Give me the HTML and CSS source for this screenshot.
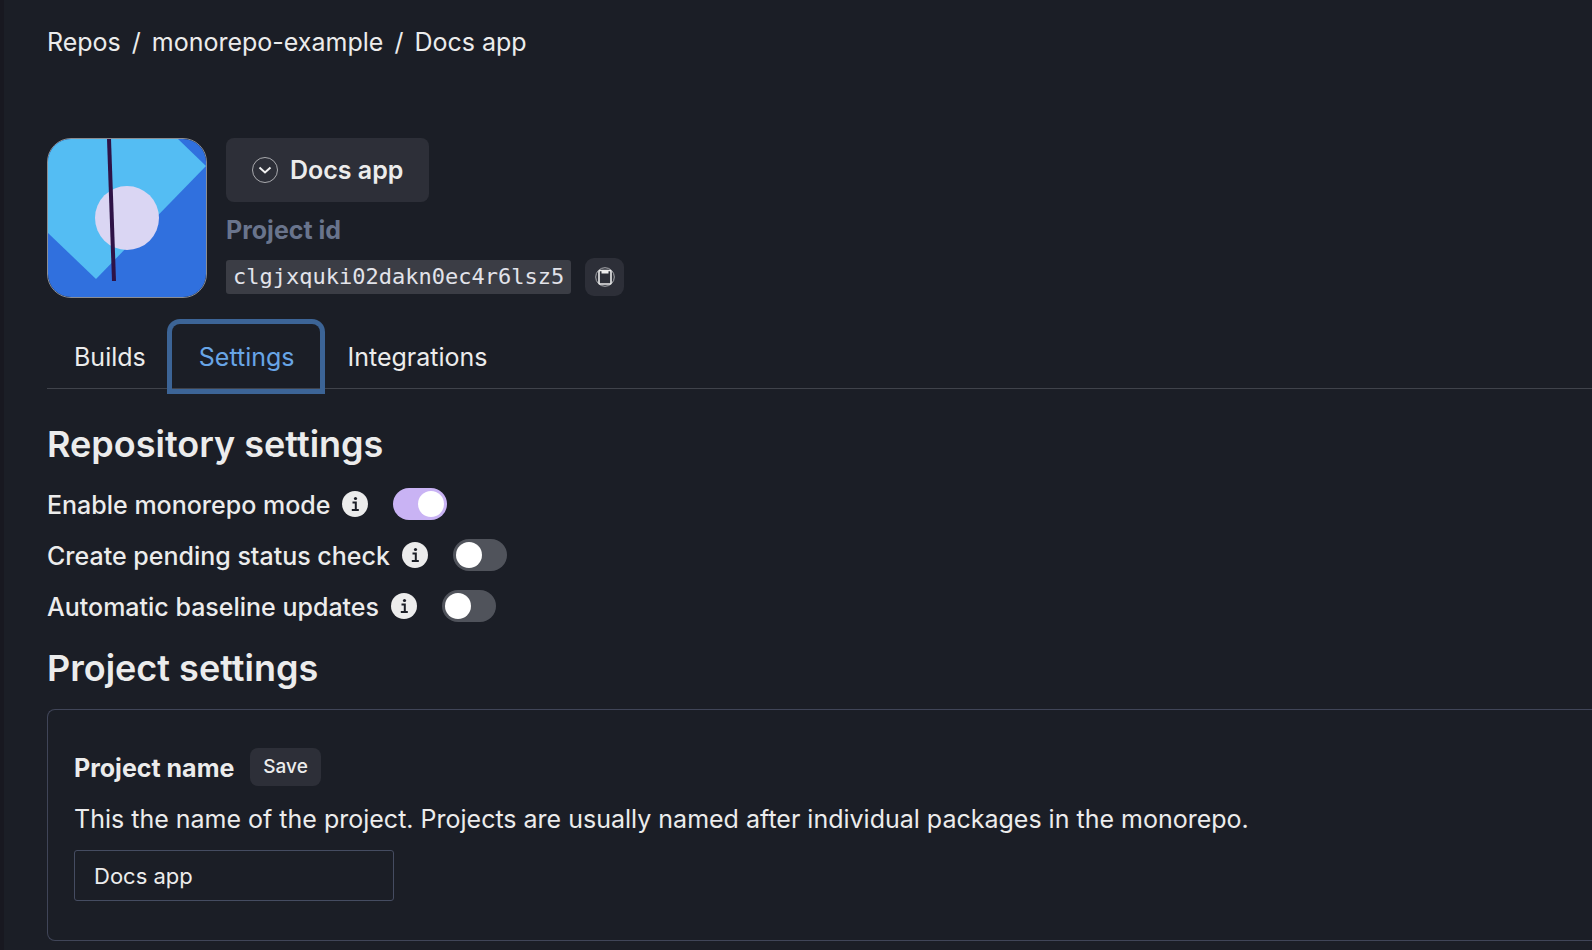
FILE: index.html
```html
<!DOCTYPE html>
<html lang="en">
<head>
<meta charset="utf-8">
<meta name="viewport" content="width=device-width, initial-scale=1">
<title>Docs app – Settings</title>
<link rel="stylesheet" href="styles.css">
</head>
<body>
<svg class="sprite" aria-hidden="true">
  <symbol id="info" viewBox="0 0 26 26">
    <circle cx="13" cy="13" r="13" fill="#ececec"/>
    <circle cx="13.500" cy="7.500" r="1.600" fill="#1b1e26"/>
    <path d="M10.500 11.500h3.300v7M9.800 18.900h7" fill="none" stroke="#1b1e26" stroke-width="2"/>
  </symbol>
</svg>
<main class="page">
  <nav class="breadcrumb" aria-label="Breadcrumb">
    <a href="#">Repos</a><span>/</span><a href="#">monorepo-example</a><span>/</span><a href="#">Docs app</a>
  </nav>

  <header class="project">
    <div class="avatar">
      <svg viewBox="0 0 158 158" aria-hidden="true">
        <rect width="158" height="158" fill="#3070de"/>
        <path d="M0 0H130L158 27 48 140 0 94z" fill="#54bdf3"/>
        <circle cx="79" cy="79" r="32" fill="#dad6f3"/>
        <path d="M61 0 66 142" stroke="#2e1246" stroke-width="4"/>
      </svg>
    </div>
    <div class="project-info">
      <button class="project-menu" type="button">
        <svg class="chevron" viewBox="0 0 26 26" fill="none" aria-hidden="true">
          <circle cx="13" cy="13" r="12.500" stroke="#a9aaae"/>
          <path d="M7.500 10.500l5.500 5 5.500-5" stroke="#f0f0f0" stroke-width="2"/>
        </svg>
        Docs app
      </button>
      <div class="id-label">Project id</div>
      <div class="id-row">
        <code class="id-code">clgjxquki02dakn0ec4r6lsz5</code>
        <button class="copy" type="button" aria-label="Copy project id">
          <svg viewBox="0 0 20 20" fill="none" aria-hidden="true">
            <circle cx="10" cy="10" r="9.300" stroke="#a9aaae"/>
            <rect x="4" y="3.500" width="12" height="13.500" rx="1" stroke="#ececec" stroke-width="1.600"/>
            <path d="M6.500 3h7v3.500h-7z" fill="#ececec"/>
          </svg>
        </button>
      </div>
    </div>
  </header>

  <nav class="tabs" aria-label="Project">
    <a class="tab" href="#">Builds</a>
    <a class="tab tab-active" href="#" aria-current="page">Settings</a>
    <a class="tab" href="#">Integrations</a>
  </nav>

  <section class="repo-settings">
    <h2>Repository settings</h2>
    <div class="option">
      <label for="monorepo">Enable monorepo mode</label>
      <svg class="info"><use href="#info"/></svg>
      <input class="switch" id="monorepo" type="checkbox" role="switch" checked>
    </div>
    <div class="option">
      <label for="pending">Create pending status check</label>
      <svg class="info"><use href="#info"/></svg>
      <input class="switch" id="pending" type="checkbox" role="switch">
    </div>
    <div class="option">
      <label for="baseline">Automatic baseline updates</label>
      <svg class="info"><use href="#info"/></svg>
      <input class="switch" id="baseline" type="checkbox" role="switch">
    </div>
  </section>

  <section>
    <h2>Project settings</h2>
    <form class="card">
      <div class="card-head">
        <label class="card-title" for="name">Project name</label>
        <button class="save" type="button">Save</button>
      </div>
      <p class="card-text">This the name of the project. Projects are usually named after individual packages in the monorepo.</p>
      <input class="field" id="name" type="text" value="Docs app">
    </form>
  </section>
</main>
</body>
</html>
```
FILE: styles.css
```css
* { box-sizing: border-box; }

body {
  margin: 0;
  background: #1b1e26;
  color: #ececec;
  font: 400 25px/32px Inter, "Liberation Sans", sans-serif;
}

a { color: inherit; text-decoration: none; }
button, input { font: inherit; color: inherit; }
button { border: 0; cursor: pointer; }
.sprite { position: absolute; width: 0; height: 0; }

.page {
  min-height: 100vh;
  padding: 26px 0 8px 43px;
  border-left: 4px solid #181820;
}

.breadcrumb { display: flex; gap: 11px; }

.project { display: flex; gap: 19px; margin-top: 80px; }
.avatar {
  width: 160px;
  height: 160px;
  border: 1px solid #8b8d92;
  border-radius: 24px;
  overflow: hidden;
}
.avatar svg { display: block; }
.project-info { display: flex; flex-direction: column; align-items: flex-start; }
.project-menu {
  display: flex;
  align-items: center;
  gap: 12px;
  padding: 16px 26px;
  border-radius: 8px;
  background: #2d2f38;
  font-weight: 600;
}
.chevron { width: 26px; height: 26px; }
.id-label { margin-top: 12px; color: #69748c; font-weight: 700; }
.id-row { display: flex; align-items: center; gap: 14px; margin-top: 12px; }
.id-code {
  padding: 1px 7px;
  border-radius: 3px;
  background: #3b3d45;
  color: #e2e3ea;
  font: 22px/32px "DejaVu Sans Mono", monospace;
}
.copy {
  display: flex;
  align-items: center;
  justify-content: center;
  width: 39px;
  height: 38px;
  padding: 0;
  border-radius: 9px;
  background: #2d2f38;
}
.copy svg { width: 20px; height: 20px; }

.tabs {
  display: flex;
  margin-top: 26px;
  border-bottom: 1px solid #40434b;
}
.tab { padding: 17px 26px 15px 27px; }
.tab-active {
  margin-bottom: -1px;
  border-radius: 8px 8px 0 0;
  box-shadow: 0 0 0 5px #3c6496;
  color: #68a5e6;
}

h2 { margin: 0; font-size: 36px; line-height: 48px; font-weight: 600; }
.repo-settings { padding: 31px 0 13px; }
.repo-settings h2 { margin-bottom: 10px; }
.option { display: flex; align-items: center; height: 51px; font-weight: 500; }
.option label { padding-top: 2px; }
.info { width: 26px; height: 26px; margin: 0 25px 0 12px; }
.switch {
  display: flex;
  appearance: none;
  width: 54px;
  height: 32px;
  margin: 0;
  padding: 3px;
  border-radius: 16px;
  background: #50535b;
}
.switch::before {
  content: "";
  width: 26px;
  height: 26px;
  border-radius: 50%;
  background: #fff;
}
.switch:checked { justify-content: flex-end; background: #c9b3f4; }

.card {
  display: flex;
  flex-direction: column;
  align-items: flex-start;
  margin-top: 17px;
  padding: 38px 26px 39px;
  border: 1px solid #404558;
  border-right: 0;
  border-radius: 8px 0 0 8px;
}
.card-head { display: flex; align-items: center; gap: 16px; }
.card-title { padding-top: 2px; font-weight: 700; }
.save {
  padding: 3px 13px;
  border-radius: 8px;
  background: #2d2f38;
  font-size: 19px;
  font-weight: 500;
}
.card-text { margin: 17px 0 15px; }
.field {
  width: 320px;
  height: 51px;
  max-width: 100%;
  padding: 0 19px;
  border: 1px solid #454c61;
  border-radius: 3px;
  background: transparent;
  font-size: 22px;
}
```
